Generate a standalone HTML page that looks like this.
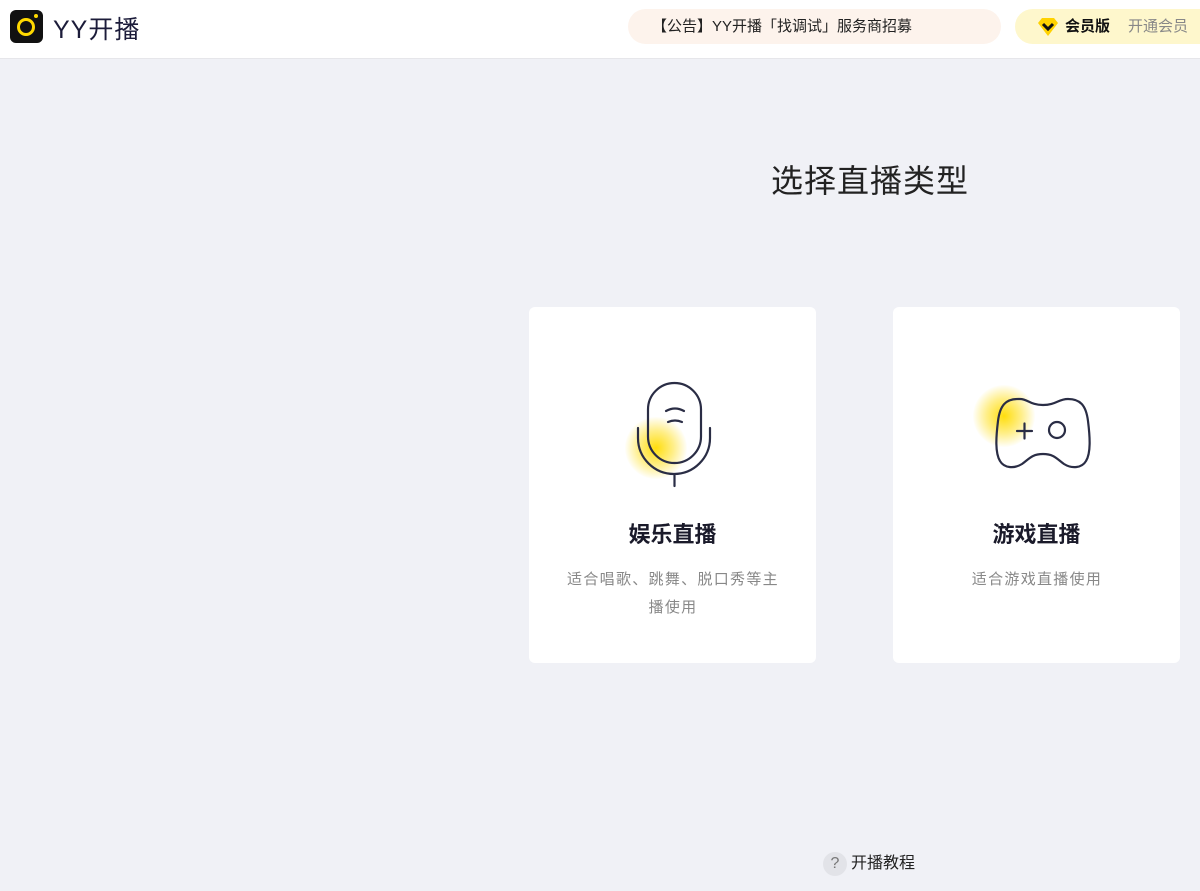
<!DOCTYPE html>
<html><head><meta charset="utf-8"><style>
*{margin:0;padding:0;box-sizing:border-box}
body{width:1200px;height:891px;background:#f0f1f6;font-family:"Liberation Sans","Noto Sans CJK SC",sans-serif;position:relative;overflow:hidden;color:#1c1c2e}
.hdr{position:absolute;left:0;top:0;width:1200px;height:59px;background:#fff;border-bottom:1px solid #e6e6ea}
.logo{position:absolute;left:10px;top:10px;width:33px;height:33px;background:#111;border-radius:6px}
.logo i{position:absolute;left:7px;top:8px;width:18px;height:18px;border:3.5px solid #ffd900;border-radius:50%}
.logo b{position:absolute;right:5px;top:4px;width:4px;height:4px;background:#ffd900;border-radius:50%}
.brand{position:absolute;left:53px;top:10px;font-size:25px;color:#1c1c3a;letter-spacing:1px}
.notice{position:absolute;left:628px;top:9px;width:373px;height:35px;border-radius:18px;background:#fdf3ec;font-size:15px;line-height:35px;padding-left:24px;color:#222}
.vip{position:absolute;left:1015px;top:9px;width:220px;height:35px;border-radius:18px;background:#fef7cc;font-size:15px;line-height:35px;padding-left:50px}
.vip b{font-weight:bold;color:#111}
.vip span{color:#888;margin-left:18px}
.title{position:absolute;left:771px;top:156px;font-size:32px;color:#222;letter-spacing:1px}
.card{position:absolute;top:307px;width:287px;height:356px;background:#fff;border-radius:6px;text-align:center}
.ct{position:absolute;left:0;width:100%;top:210px;font-size:22px;font-weight:bold;color:#1a1a2a}
.cd{position:absolute;left:33px;width:222px;top:259px;font-size:15px;line-height:28px;color:#888;letter-spacing:1.3px}
.glow{position:absolute;border-radius:50%;background:radial-gradient(circle,rgba(255,220,0,.95) 0%,rgba(255,225,40,.55) 40%,rgba(255,235,100,0) 72%)}
.help{position:absolute;left:823px;top:852px;font-size:16px;color:#222;line-height:24px}
.help i{display:inline-block;width:24px;height:24px;border-radius:50%;background:#e2e3e8;color:#777;font-style:normal;text-align:center;font-size:16px;margin-right:4px;vertical-align:top}
</style></head><body>
<div class="hdr">
<div class="logo"><i></i><b></b></div>
<div class="brand">YY开播</div>
<div class="notice">【公告】YY开播「找调试」服务商招募</div>
<div class="vip"><svg style="position:absolute;left:22px;top:8px" width="22" height="20" viewBox="0 0 22 20"><path d="M5 1h12l4 5-10 13L1 6z" fill="#ffd200"/><path d="M6 7l5 5 5-5" fill="none" stroke="#111" stroke-width="3"/></svg><b>会员版</b><span>开通会员</span></div>
</div>
<div class="title">选择直播类型</div>
<div class="card" style="left:529px">
<div class="glow" style="left:96px;top:110px;width:62px;height:62px"></div>
<svg style="position:absolute;left:0;top:0" width="287" height="200"><g fill="none" stroke="#2a2d45" stroke-width="2.2" stroke-linecap="round"><rect x="119" y="76" width="53" height="80" rx="26.5"/><path d="M137 104q9-5 18 0M139 115q7-3 14 0"/><path d="M109 121v10a36 36 0 0 0 72 0v-10M145.5 167v12"/></g></svg>
<div class="ct">娱乐直播</div>
<div class="cd">适合唱歌、跳舞、脱口秀等主播使用</div>
</div>
<div class="card" style="left:893px">
<div class="glow" style="left:80px;top:78px;width:62px;height:62px"></div>
<svg style="position:absolute;left:0;top:0" width="287" height="200"><g fill="none" stroke="#2a2d45" stroke-width="2.2" stroke-linecap="round"><path d="M125 92c-12 0-18 6-20 22-2 16-3 32 2 40 4 7 14 8 22 3 7-5 10-10 21-10s14 5 21 10c8 5 18 4 22-3 5-8 4-24 2-40-2-16-8-22-20-22-10 0-12 6-25 6s-15-6-23-6z"/><path d="M124 124h15M131.5 116.5v15"/><circle cx="164" cy="123" r="8"/></g></svg>
<div class="ct">游戏直播</div>
<div class="cd">适合游戏直播使用</div>
</div>
<div class="help"><i>?</i>开播教程</div>
</body></html>
